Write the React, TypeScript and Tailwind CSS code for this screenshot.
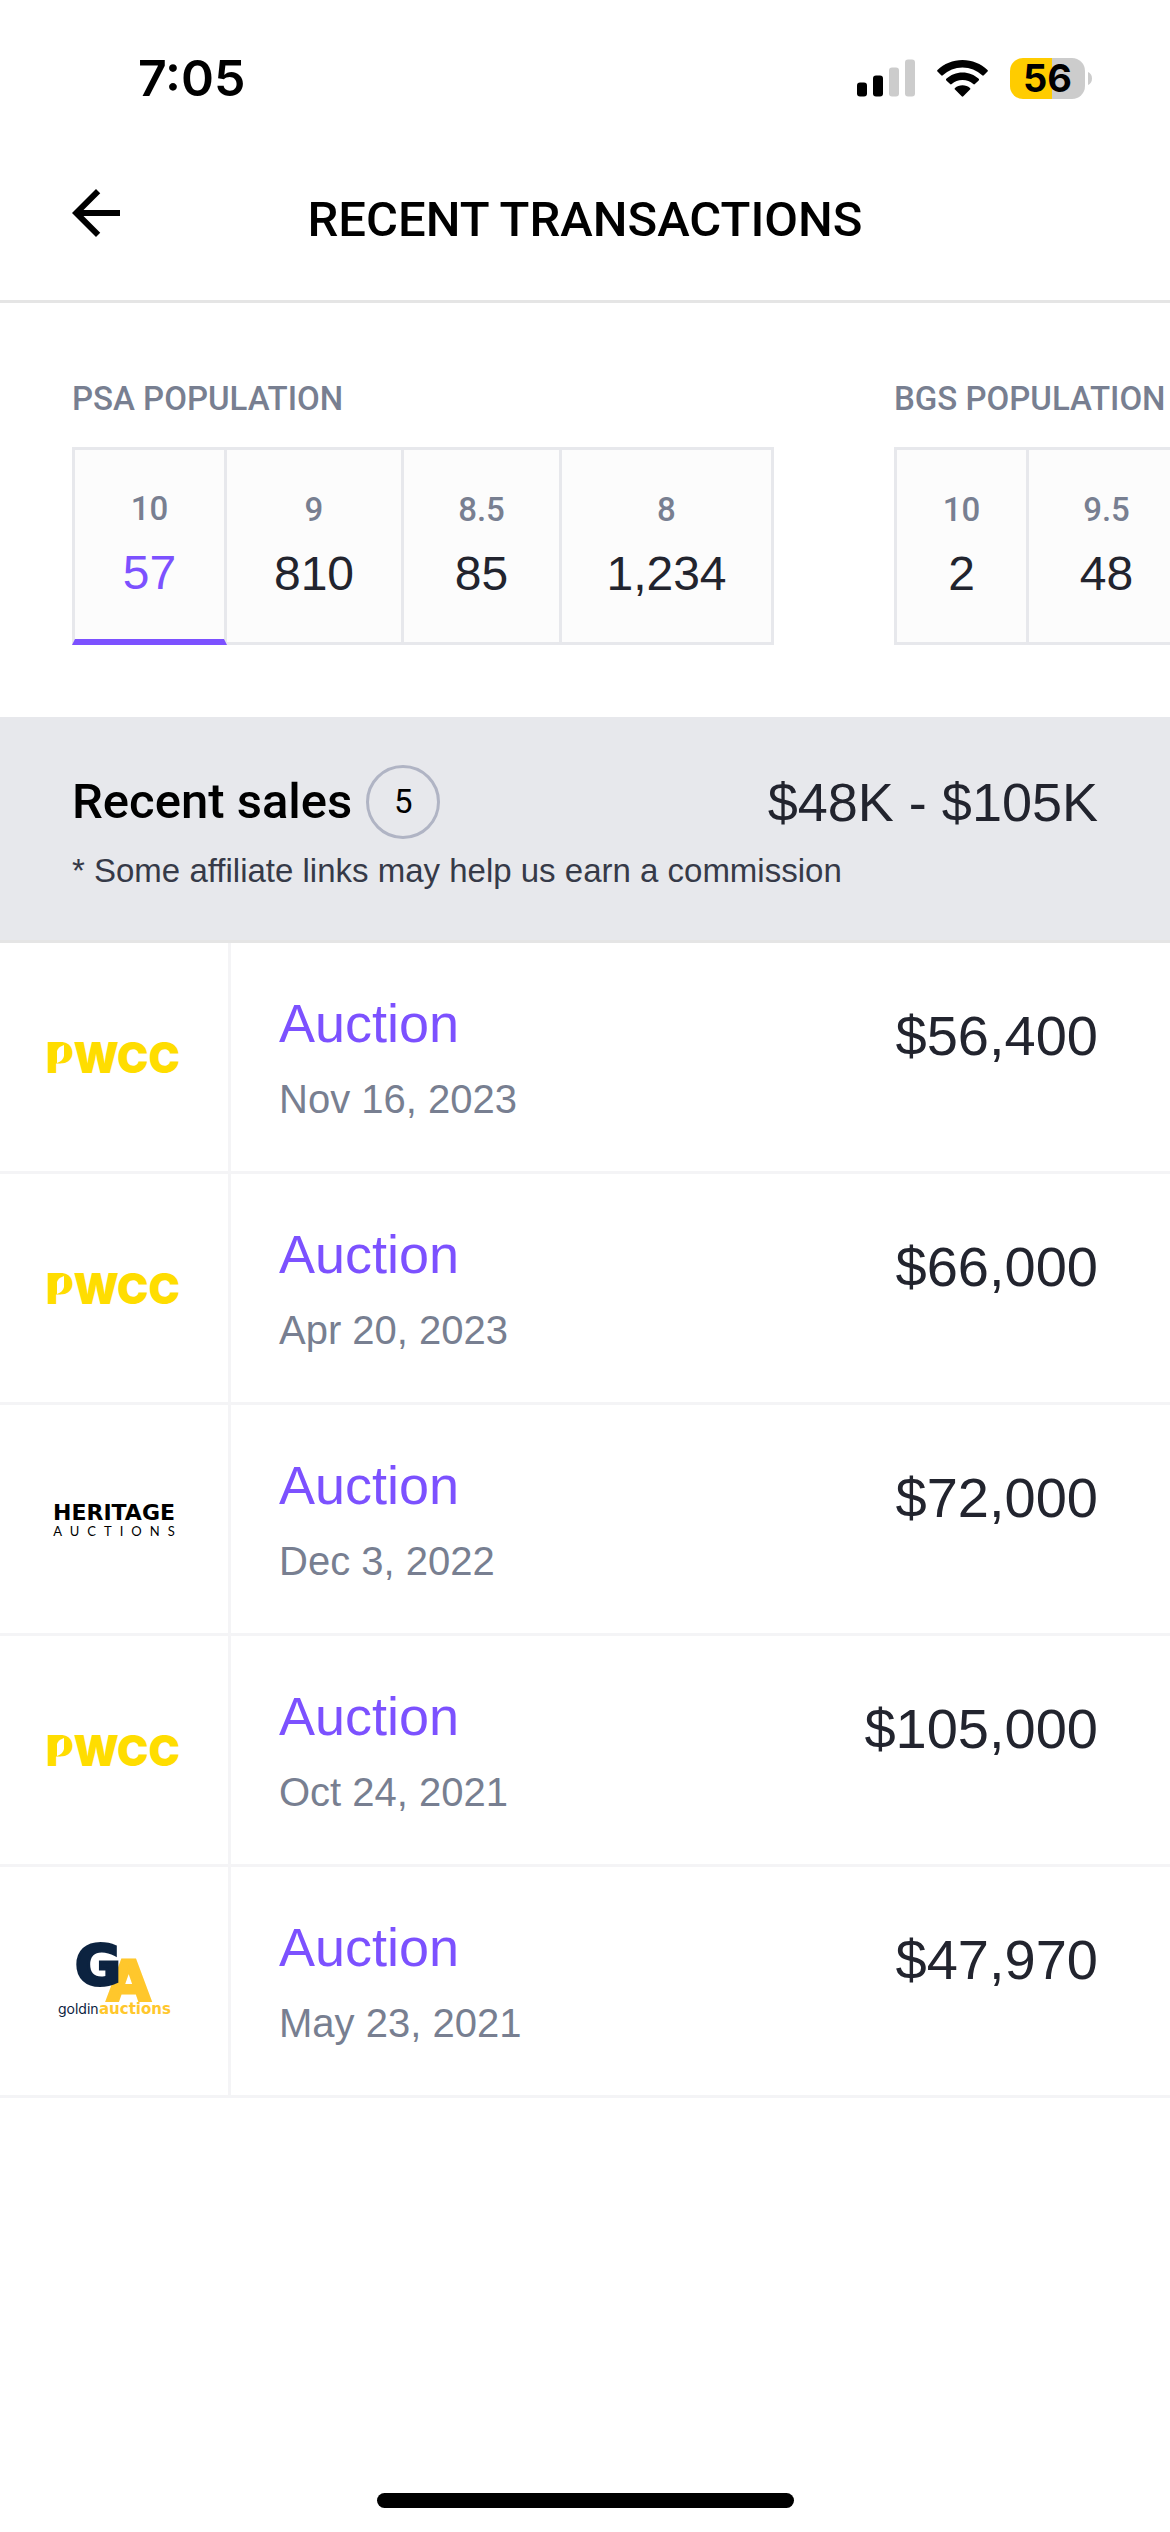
import React from "react";

type Grade = { grade: string; count: string; width: string; active?: boolean };
type Sale = { house: "pwcc" | "heritage" | "goldin"; date: string; price: string };

const psa: Grade[] = [
  { grade: "10", count: "57", width: "w-[155px]", active: true },
  { grade: "9", count: "810", width: "w-[177px]" },
  { grade: "8.5", count: "85", width: "w-[158px]" },
  { grade: "8", count: "1,234", width: "w-[212px]" },
];

const bgs: Grade[] = [
  { grade: "10", count: "2", width: "w-[135px]" },
  { grade: "9.5", count: "48", width: "w-[158px]" },
];

const sales: Sale[] = [
  { house: "pwcc", date: "Nov 16, 2023", price: "$56,400" },
  { house: "pwcc", date: "Apr 20, 2023", price: "$66,000" },
  { house: "heritage", date: "Dec 3, 2022", price: "$72,000" },
  { house: "pwcc", date: "Oct 24, 2021", price: "$105,000" },
  { house: "goldin", date: "May 23, 2021", price: "$47,970" },
];

function StatusBar() {
  return (
    <div className="flex h-[156px] items-center justify-between pr-[78px] pl-[138px]">
      <time className="font-[Inter,sans-serif] text-[50px] leading-[60px] font-semibold">7:05</time>
      <div className="flex items-center gap-[22px]">
        <svg width="58" height="38" viewBox="0 0 58 38" aria-label="Signal">
          <rect x="0" y="23.500" width="10" height="14" rx="3" fill="#000" />
          <rect x="16" y="16.500" width="10" height="21" rx="3" fill="#000" />
          <rect x="32" y="8.500" width="10" height="29" rx="3" fill="#ccc" />
          <rect x="48" y="0.500" width="10" height="37" rx="3" fill="#ccc" />
        </svg>
        <svg width="51" height="37" viewBox="0 0 51 37" aria-label="Wi-Fi">
          <path d="M25.500 0C35.200 0 44 3.800 50.500 10q.8.8 0 1.600l-3.700 3.700q-.8.800-1.600 0A29 29 0 0 0 25.500 7.400 29 29 0 0 0 5.800 15.300q-.8.800-1.600 0L.5 11.600q-.8-.8 0-1.600C7 3.800 15.800 0 25.500 0Z" />
          <path d="M25.500 12.500c6.200 0 11.900 2.300 16.200 6.300q.8.800 0 1.600l-3.800 3.700q-.8.800-1.600 0A16 16 0 0 0 25.500 20a16 16 0 0 0-10.800 4.100q-.8.800-1.600 0l-3.800-3.700q-.8-.8 0-1.600c4.300-4 10-6.300 16.200-6.300Z" />
          <path d="M25.500 25.200c2.900 0 5.500 1 7.500 2.700q.8.800 0 1.600l-6.700 6.800q-.8.800-1.600 0L18 29.500q-.8-.8 0-1.600c2-1.700 4.600-2.700 7.500-2.700Z" />
        </svg>
        <div className="flex items-center gap-[3px]">
          <div className="flex h-[41px] w-[75px] items-center justify-center rounded-[13px] bg-linear-to-r from-[#ffcc00] from-56% to-[#cccccc] to-56% font-[Inter,sans-serif] text-[38px] leading-[40px] font-bold">
            56
          </div>
          <svg width="4" height="13" viewBox="0 0 4 13" aria-hidden="true">
            <path d="M0 0C2.500 1 4 3.500 4 6.500S2.500 12 0 13Z" fill="#ccc" />
          </svg>
        </div>
      </div>
    </div>
  );
}

function Population({ title, grades }: { title: string; grades: Grade[] }) {
  return (
    <section className="shrink-0">
      <h2 className="mb-6 text-[33px] leading-[48px] font-medium whitespace-nowrap text-[#787f91]">{title}</h2>
      <div className="flex h-[198px]">
        {grades.map((g, i) => (
          <button
            key={g.grade}
            type="button"
            className={`flex shrink-0 flex-col items-center justify-center gap-2.5 border-y-[3px] border-r-[3px] border-[#e7e8ec] bg-[#fcfcfc] pb-0.5 ${g.width} ${
              i === 0 ? "border-l-[3px]" : ""
            } ${g.active ? "border-b-[6px] border-b-[#7c51ff]" : ""}`}
          >
            <span className="text-[33px] leading-[48px] font-medium text-[#787f91]">{g.grade}</span>
            <span
              className={`font-['Liberation_Sans',sans-serif] text-[48px] leading-[60px] ${
                g.active ? "text-[#7c51ff]" : "text-[#22242e]"
              }`}
            >
              {g.count}
            </span>
          </button>
        ))}
      </div>
    </section>
  );
}

function PwccLogo() {
  return (
    <svg width="148" height="60" viewBox="0 -2 148 60" aria-label="PWCC">
      <text x="6" y="44" fontFamily="Inter, sans-serif" fontWeight="900" fontSize="42" fill="#ffdd00">
        PWCC
      </text>
      <path d="M14 17h10q5 3 4 10l-4 6H14Z" fill="#ffdd00" />
      <path d="M17 34V22q1-4 7-6v11q-1 5-7 7Z" fill="#fff" />
    </svg>
  );
}

function HeritageLogo() {
  return (
    <div className="flex flex-col items-center pt-0.5 text-black">
      <span className="font-['DejaVu_Sans',sans-serif] text-[22px] leading-[22px] font-bold">HERITAGE</span>
      <span className="pl-2 font-[Lato,sans-serif] text-[13px] leading-[14px] tracking-[8px]">AUCTIONS</span>
    </div>
  );
}

function GoldinLogo() {
  return (
    <svg width="128" height="96" viewBox="0 0 128 96" aria-label="Goldin Auctions">
      <g fontFamily="'DejaVu Sans', sans-serif" fontWeight="700">
        <text x="57" y="67" fontSize="56" fill="#ffc72c" stroke="#ffc72c" strokeWidth="3">A</text>
        <text x="25" y="51" fontSize="56" fill="#0c2340" stroke="#0c2340" strokeWidth="3">G</text>
        <text x="49" y="81" fontSize="15" fill="#ffc72c">auctions</text>
      </g>
      <text x="8" y="81" fontFamily="Inter, sans-serif" fontSize="14" fill="#0c2340">goldin</text>
    </svg>
  );
}

const logos = { pwcc: PwccLogo, heritage: HeritageLogo, goldin: GoldinLogo };

function SaleRow({ sale }: { sale: Sale }) {
  const Logo = logos[sale.house];
  return (
    <li className="flex h-[231px] border-b-[3px] border-[#f4f4f6] font-['Liberation_Sans',sans-serif]">
      <div className="flex w-[231px] shrink-0 items-center justify-center border-r-[3px] border-[#f4f4f6]">
        <Logo />
      </div>
      <div className="flex flex-1 items-start justify-between pr-[72px] pl-12">
        <div className="flex flex-col gap-4 pt-[50px]">
          <a href="#auction" className="text-[54px] leading-[60px] text-[#7c51ff]">Auction</a>
          <span className="text-[40px] leading-[60px] text-[#787f91]">{sale.date}</span>
        </div>
        <span className="pt-[63px] text-[56px] leading-[60px] text-[#22242e]">{sale.price}</span>
      </div>
    </li>
  );
}

export default function App() {
  return (
    <main className="flex min-h-screen flex-col overflow-x-hidden bg-white font-[Roboto,sans-serif] text-black">
      <header className="border-b-[3px] border-[#e5e5e5] pb-[30px]">
        <StatusBar />
        <div className="grid h-[114px] grid-cols-[72px_1fr_72px] items-center px-[60px]">
          <button type="button" aria-label="Back">
            <svg width="72" height="72" viewBox="0 0 24 24" fill="#000">
              <path d="M20 11H7.830l5.590-5.590L12 4l-8 8 8 8 1.410-1.410L7.830 13H20v-2z" />
            </svg>
          </button>
          <h1 className="pt-[14px] text-center text-[49px] leading-[60px] font-medium">RECENT TRANSACTIONS</h1>
        </div>
      </header>

      <div className="flex gap-[120px] overflow-x-auto px-[72px] py-[72px] [scrollbar-width:none]">
        <Population title="PSA POPULATION" grades={psa} />
        <Population title="BGS POPULATION" grades={bgs} />
      </div>

      <section className="border-b-[3px] border-[#e5e5e5] bg-[#e7e8ec] px-[72px] pt-12 pb-[45px]">
        <div className="flex items-center justify-between">
          <div className="flex items-center gap-[14px]">
            <h2 className="text-[49px] leading-[60px] font-medium">Recent sales</h2>
            <span className="flex h-[74px] w-[74px] items-center justify-center rounded-full border-[3px] border-[#b0b4c4] text-[33px] leading-[48px]">
              5
            </span>
          </div>
          <span className="font-['Liberation_Sans',sans-serif] text-[54px] leading-[60px] text-[#22242e]">$48K - $105K</span>
        </div>
        <p className="mt-2 font-['Liberation_Sans',sans-serif] text-[33px] leading-[48px] text-[#363a48]">
          * Some affiliate links may help us earn a commission
        </p>
      </section>

      <ul>
        {sales.map((s) => (
          <SaleRow key={s.date} sale={s} />
        ))}
      </ul>

      <div className="mt-auto flex justify-center pb-6">
        <div className="h-[15px] w-[417px] rounded-full bg-black" />
      </div>
    </main>
  );
}
